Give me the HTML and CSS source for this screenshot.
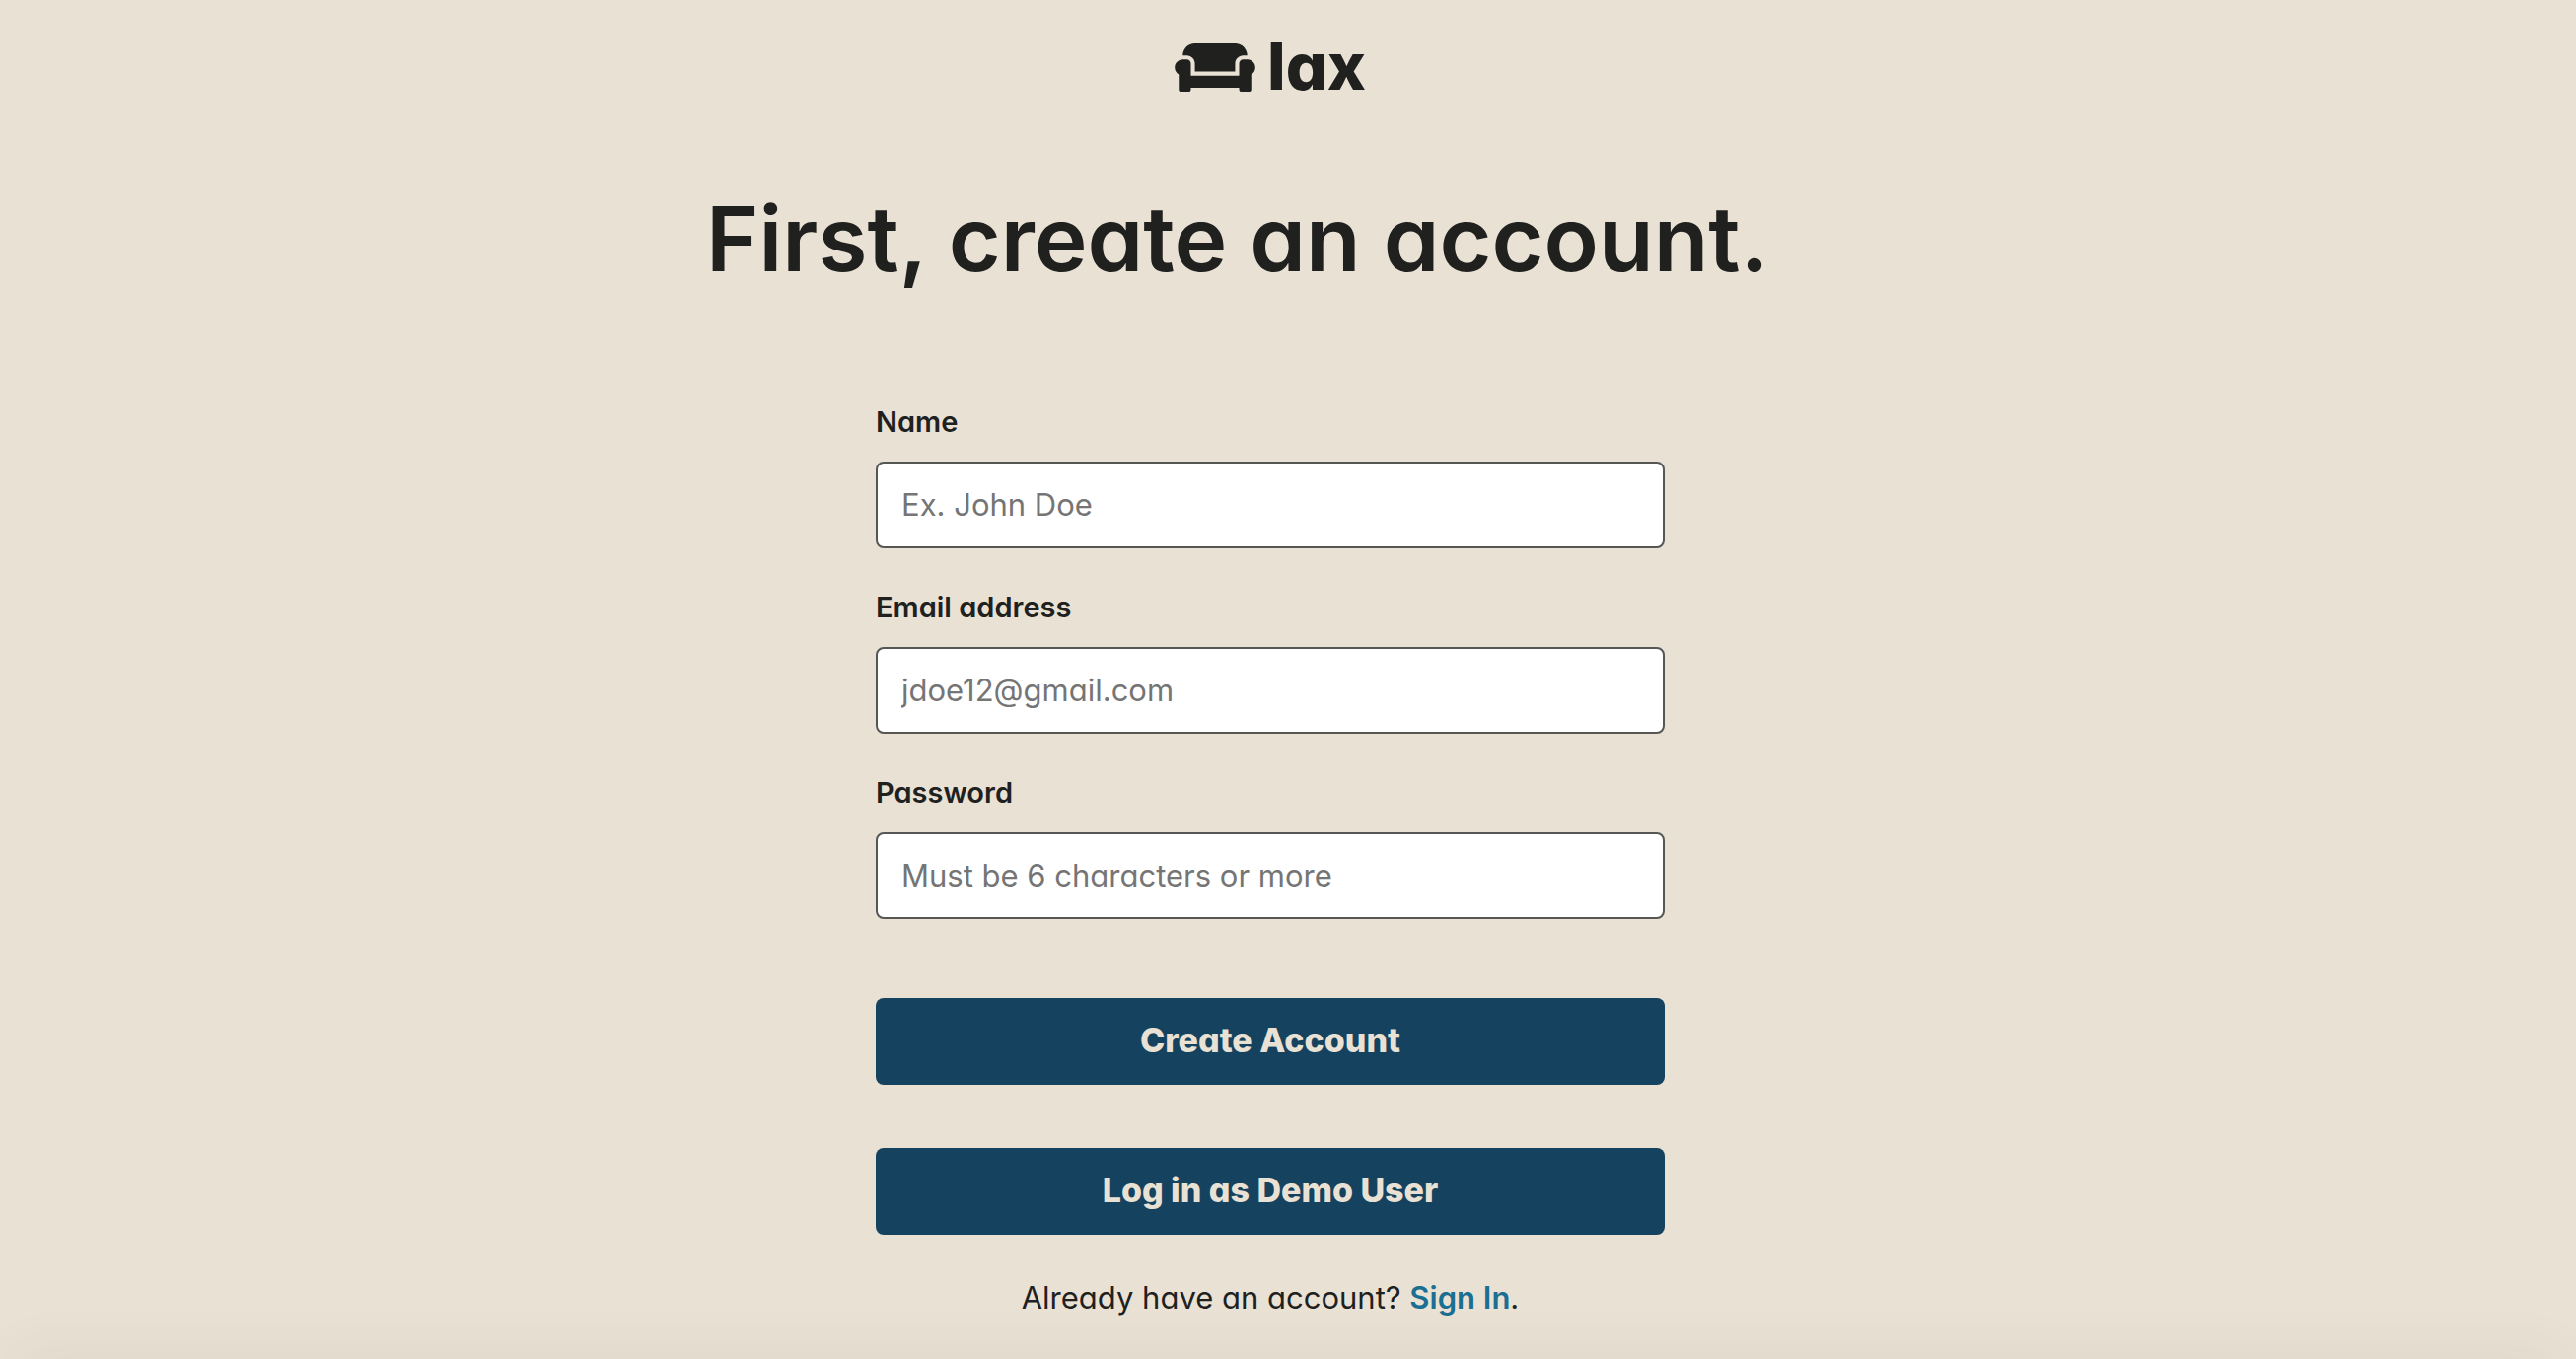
FILE: index.html
```html
<!DOCTYPE html>
<html lang="en">
<head>
<meta charset="utf-8">
<meta name="viewport" content="width=device-width, initial-scale=1">
<title>lax | Create an account</title>
<link rel="stylesheet" href="styles.css">
</head>
<body>
<div class="page">
  <header class="logo">
    <svg class="logo-icon" viewBox="0 64 640 384" aria-hidden="true"><path fill="currentColor" d="M160 224v64h320v-64c0-35.3 28.7-64 64-64h32c0-53-43-96-96-96H160c-53 0-96 43-96 96h32c35.3 0 64 28.7 64 64zm416-32h-32c-17.7 0-32 14.3-32 32v96H128v-96c0-17.7-14.3-32-32-32H64c-35.3 0-64 28.7-64 64 0 23.6 13 44 32 55.1V432c0 8.8 7.2 16 16 16h64c8.8 0 16-7.2 16-16v-16h384v16c0 8.8 7.2 16 16 16h64c8.8 0 16-7.2 16-16V311.1c19-11.1 32-31.5 32-55.1 0-35.3-28.7-64-64-64z"/></svg>
    <span class="logo-name">lax</span>
  </header>
  <main class="signup">
    <h1 class="title">First, create an account.</h1>
    <form class="form">
      <div class="field">
        <label class="label" for="name">Name</label>
        <input class="input" id="name" type="text" placeholder="Ex. John Doe">
      </div>
      <div class="field">
        <label class="label" for="email">Email address</label>
        <input class="input" id="email" type="email" placeholder="jdoe12@gmail.com">
      </div>
      <div class="field">
        <label class="label" for="password">Password</label>
        <input class="input" id="password" type="password" placeholder="Must be 6 characters or more">
      </div>
      <div class="actions">
        <button class="button" type="submit">Create Account</button>
        <button class="button" type="button">Log in as Demo User</button>
      </div>
    </form>
    <p class="switch">Already have an account? <a class="link" href="#signin">Sign In</a>.</p>
  </main>
</div>
</body>
</html>
```
FILE: styles.css
```css
* {
  box-sizing: border-box;
}

body {
  margin: 0;
  background: #e9e1d4;
  color: #20211f;
  font-family: Inter, "Open Sans", sans-serif;
  font-feature-settings: "cv11";
}

.page {
  display: flex;
  flex-direction: column;
  align-items: center;
  min-height: 100vh;
  padding: 32px 36px 0 0;
}

/* soft shade along the lower edge of the window */
.page::after {
  content: "";
  position: fixed;
  right: 20px;
  bottom: -16px;
  left: 20px;
  height: 8px;
  box-shadow: 0 0 56px 4px rgba(90, 70, 50, 0.16);
  pointer-events: none;
}

.logo {
  display: flex;
  align-items: center;
  gap: 12px;
  height: 72px;
}

.logo-icon {
  width: 82px;
  height: 49px;
}

.logo-name {
  padding-bottom: 2px;
  font-size: 66px;
  font-weight: 800;
  line-height: 72px;
}

.signup {
  display: flex;
  flex-direction: column;
  align-items: center;
  width: 100%;
  max-width: 1144px;
}

.title {
  align-self: stretch;
  margin: 78px 0 106px;
  font-size: 91px;
  font-weight: 600;
  line-height: 120px;
}

.form {
  display: flex;
  flex-direction: column;
  gap: 40px;
  width: 100%;
  max-width: 800px;
}

.field {
  display: flex;
  flex-direction: column;
  gap: 20px;
}

.label {
  font-size: 29px;
  font-weight: 600;
  line-height: 40px;
}

.input {
  width: 100%;
  height: 88px;
  padding: 0 24px 2px;
  border: 2px solid #565755;
  border-radius: 8px;
  background: #fff;
  color: inherit;
  font: inherit;
  font-size: 31px;
  font-feature-settings: inherit;
}

.input::placeholder {
  color: #757575;
  opacity: 1;
}

.actions {
  display: flex;
  flex-direction: column;
  gap: 64px;
  padding-top: 40px;
}

.button {
  height: 88px;
  padding: 0 24px 4px;
  border: 0;
  border-radius: 8px;
  background: #15425f;
  color: #e9e1d4;
  font: inherit;
  font-size: 34px;
  font-weight: 800;
  font-feature-settings: inherit;
  cursor: pointer;
}

.switch {
  margin: 40px 0 0;
  font-size: 31px;
  line-height: 48px;
}

.link {
  color: #1b6f92;
  font-weight: 600;
  text-decoration: none;
}
```
